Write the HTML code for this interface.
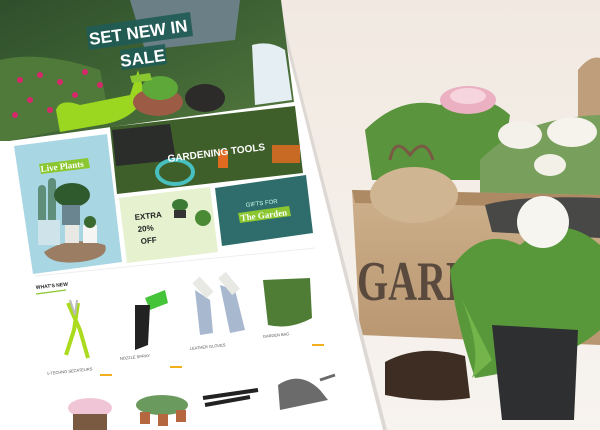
<!DOCTYPE html>
<html><head><meta charset="utf-8"><style>
html,body{margin:0;padding:0;width:600px;height:430px;overflow:hidden;background:#f3ede7}
svg{display:block}
text{font-family:"Liberation Sans",sans-serif}
text.serif{font-family:"Liberation Serif",serif}
</style></head><body>
<svg width="600" height="430" viewBox="0 0 600 430" xmlns="http://www.w3.org/2000/svg">
<defs>
<linearGradient id="bg" x1="0" y1="0" x2="0" y2="1"><stop offset="0" stop-color="#f1e9e1"/><stop offset="1" stop-color="#f7f3ef"/></linearGradient>
<linearGradient id="wood" x1="0" y1="0" x2="0" y2="1"><stop offset="0" stop-color="#cdb08c"/><stop offset="1" stop-color="#b89670"/></linearGradient>
<linearGradient id="hero" x1="0" y1="0" x2="1" y2="1"><stop offset="0" stop-color="#2f4f2c"/><stop offset="0.5" stop-color="#3f6334"/><stop offset="1" stop-color="#557a3e"/></linearGradient>
</defs>
<rect width="600" height="430" fill="url(#bg)"/>
<path d="M578 70 Q590 55 600 58 L600 140 L578 140 Z" fill="#bf9e7c"/>
<path d="M365 130 Q400 95 440 105 Q480 88 510 115 L500 180 L372 180 Z" fill="#5a943d"/>
<ellipse cx="468" cy="100" rx="28" ry="14" fill="#ebb0c2"/>
<ellipse cx="468" cy="96" rx="18" ry="8" fill="#f6d5de"/>
<path d="M480 160 Q520 118 600 115 L600 200 L480 200 Z" fill="#789f5c"/>
<ellipse cx="520" cy="135" rx="22" ry="14" fill="#f4f1ea"/>
<ellipse cx="572" cy="132" rx="25" ry="15" fill="#f6f3ec"/>
<ellipse cx="550" cy="165" rx="16" ry="11" fill="#f3f0e8"/>
<path d="M352 190 L600 195 L600 345 L360 335 Z" fill="url(#wood)"/>
<path d="M352 190 L600 195 L600 208 L355 203 Z" fill="#ad8a64"/>
<ellipse cx="414" cy="195" rx="44" ry="28" fill="#cfb591"/>
<path d="M390 160 Q395 135 410 155 Q425 135 433 160" stroke="#7a5a44" stroke-width="3" fill="none"/>
<text class="serif" x="357" y="300" font-size="56" font-weight="bold" fill="#5a4a3e" textLength="118" lengthAdjust="spacingAndGlyphs">GARD</text>
<path d="M485 205 Q520 195 600 198 L600 238 L492 232 Z" fill="#484947"/>
<path d="M450 270 Q480 225 520 245 Q560 210 600 245 L600 330 Q560 365 475 378 Q455 320 450 270 Z" fill="#58983a"/>
<path d="M462 300 Q482 350 472 378 L492 360 Z" fill="#75b34b"/>
<circle cx="543" cy="222" r="26" fill="#f7f5f0"/>
<path d="M492 325 L578 330 L574 420 L502 420 Z" fill="#2e2f31"/>
<path d="M385 362 Q420 343 465 356 L470 398 Q430 404 385 395 Z" fill="#3e2d22"/>
<path d="M0 0 L278 0 L387 430 L0 430 Z" fill="#ddd8d3"/>
<path d="M0 0 L275 0 L383 430 L0 430 Z" fill="#ffffff"/>
<path d="M0 0 L281 0 L294 102 L9 141 L0 141 Z" fill="url(#hero)"/>
<path d="M0 60 Q40 50 100 70 L110 120 L9 141 L0 141 Z" fill="#4f7a3a"/>
<g fill="#d4286a"><circle cx="20" cy="80" r="3"/><circle cx="40" cy="75" r="3"/><circle cx="60" cy="82" r="3"/><circle cx="85" cy="72" r="3"/><circle cx="30" cy="100" r="3"/><circle cx="75" cy="95" r="3"/><circle cx="15" cy="115" r="3"/><circle cx="50" cy="110" r="3"/><circle cx="100" cy="85" r="3"/></g>
<path d="M56 110 Q60 98 80 105 L130 95 L138 70 L145 95 Q135 120 100 125 L60 132 Z" fill="#9bd620"/>
<ellipse cx="158" cy="102" rx="25" ry="14" fill="#9b5b45"/>
<ellipse cx="160" cy="88" rx="18" ry="12" fill="#5ea83a"/>
<ellipse cx="205" cy="98" rx="20" ry="14" fill="#2d2b2a"/>
<path d="M252 45 Q270 40 285 50 L292 100 L255 105 Z" fill="#e5eef3"/>
<path d="M130 0 L240 0 L235 40 L145 50 Z" fill="#6b7f86"/>
<path d="M86 27 L190 12 L193 36 L89 50 Z" fill="#1f5b55" opacity=".9"/>
<path d="M120 50 L165 44 L167 64 L122 70 Z" fill="#1f5b55" opacity=".9"/>
<text x="90" y="45" font-size="17" font-weight="bold" fill="#fff" transform="rotate(-8 90 45)">SET NEW IN</text>
<text x="121" y="67" font-size="17" font-weight="bold" fill="#fff" transform="rotate(-8 121 67)">SALE</text>
<path d="M130 76 L150 73 L152 80 L132 83 Z" fill="#8bc730"/>
<path d="M14 146 L107 134 L122 262 L33 274 Z" fill="#a8d6e3"/>
<path d="M39 164 L88 158 L90 168 L41 174 Z" fill="#8bc730"/>
<text class="serif" x="41" y="172" font-size="9" font-weight="bold" fill="#fff" transform="rotate(-7 41 172)">Live Plants</text>
<path d="M44 252 Q70 235 105 245 Q110 258 80 262 Q50 265 44 252 Z" fill="#9a7d62"/>
<rect x="38" y="185" width="8" height="40" rx="4" fill="#5f8f7a"/>
<rect x="48" y="178" width="8" height="45" rx="4" fill="#5f8f7a"/>
<rect x="38" y="220" width="22" height="25" fill="#cfe3ea"/>
<ellipse cx="72" cy="195" rx="18" ry="12" fill="#2f5a2e"/>
<rect x="62" y="205" width="18" height="20" fill="#6a8490"/>
<rect x="65" y="225" width="14" height="18" fill="#e8e8e4"/>
<rect x="83" y="225" width="14" height="18" fill="#f5f5f3"/>
<circle cx="90" cy="222" r="6" fill="#3b6a31"/>
<path d="M110 127 L295 106 L303 173 L117 194 Z" fill="#3f5f2a"/>
<path d="M112 130 L170 124 L176 160 L116 166 Z" fill="#2b2d2b"/>
<ellipse cx="175" cy="172" rx="18" ry="12" fill="none" stroke="#48c0c0" stroke-width="4"/>
<rect x="272" y="145" width="28" height="18" fill="#c86a23"/>
<rect x="218" y="150" width="10" height="18" fill="#e06a20"/>
<text x="168" y="162" font-size="10" font-weight="bold" fill="#fff" transform="rotate(-7 168 162)">GARDENING TOOLS</text>
<path d="M119 198 L210 187 L218 252 L127 263 Z" fill="#e5f1cf"/>
<text x="135" y="220" font-size="8" font-weight="bold" fill="#222" transform="rotate(-6 135 220)">EXTRA</text>
<text x="138" y="232" font-size="8" font-weight="bold" fill="#222" transform="rotate(-6 138 232)">20%</text>
<text x="141" y="244" font-size="8" font-weight="bold" fill="#222" transform="rotate(-6 141 244)">OFF</text>
<ellipse cx="180" cy="205" rx="8" ry="6" fill="#3c7a36"/>
<rect x="174" y="210" width="12" height="8" fill="#333"/>
<ellipse cx="203" cy="218" rx="8" ry="8" fill="#4b8a35"/>
<path d="M215 188 L306 175 L313 233 L222 246 Z" fill="#2f6d6c"/>
<path d="M238 213 L289 206 L291 216 L240 223 Z" fill="#8bc730"/>
<text x="246" y="207" font-size="6" fill="#cfe" transform="rotate(-7 246 207)">GIFTS FOR</text>
<text class="serif" x="241" y="221" font-size="9" font-weight="bold" fill="#fff" transform="rotate(-7 241 221)">The Garden</text>
<path d="M35 276 L315 248" stroke="#eee" stroke-width="1"/>
<text x="36" y="289" font-size="5" font-weight="bold" fill="#222" transform="rotate(-6 36 289)">WHAT'S NEW</text>
<path d="M36 294 L66 290" stroke="#8bc730" stroke-width="1.2"/>
<path d="M68 303 L80 330 L88 358 M78 303 L74 330 L66 355" stroke="#aadb1e" stroke-width="4" fill="none"/>
<path d="M70 300 L75 315 M77 300 L75 315" stroke="#bbb" stroke-width="2"/>
<path d="M145 298 L165 290 L168 303 L150 310 Z" fill="#45c43a"/>
<path d="M135 305 L150 305 L148 345 L135 350 Z" fill="#222"/>
<path d="M195 290 L210 300 L213 333 L200 335 Z" fill="#a7b8cf"/>
<path d="M220 285 L235 290 L245 330 L230 333 Z" fill="#a7b8cf"/>
<path d="M196 280 L210 295 M222 275 L236 292" stroke="#e8e8e4" stroke-width="10"/>
<path d="M263 280 L310 278 L312 318 Q290 330 268 325 Z" fill="#4f7d35"/>
<g fill="#555" font-size="4"><text x="47" y="375" transform="rotate(-6 47 375)">1-TECHNO SECATEURS</text><text x="120" y="360" transform="rotate(-6 120 360)">NOZZLE SPRAY</text><text x="190" y="350" transform="rotate(-6 190 350)">LEATHER GLOVES</text><text x="263" y="338" transform="rotate(-6 263 338)">GARDEN BAG</text></g>
<g fill="#f2b01e"><rect x="100" y="374" width="12" height="2"/><rect x="170" y="366" width="12" height="2"/><rect x="312" y="344" width="12" height="2"/></g>
<ellipse cx="90" cy="408" rx="22" ry="10" fill="#f0c6d6"/>
<rect x="73" y="414" width="34" height="16" fill="#7a5a40"/>
<ellipse cx="162" cy="405" rx="26" ry="10" fill="#6b9a5e"/>
<g fill="#b5683f"><rect x="140" y="412" width="10" height="12"/><rect x="158" y="414" width="10" height="12"/><rect x="176" y="410" width="10" height="12"/></g>
<path d="M203 398 L258 390 M205 405 L250 397" stroke="#222" stroke-width="4"/>
<path d="M278 385 Q300 370 320 390 L328 400 L280 410 Z" fill="#6b6b6b"/>
<path d="M320 380 L335 375" stroke="#6b6b6b" stroke-width="3"/>
</svg>
</body></html>
